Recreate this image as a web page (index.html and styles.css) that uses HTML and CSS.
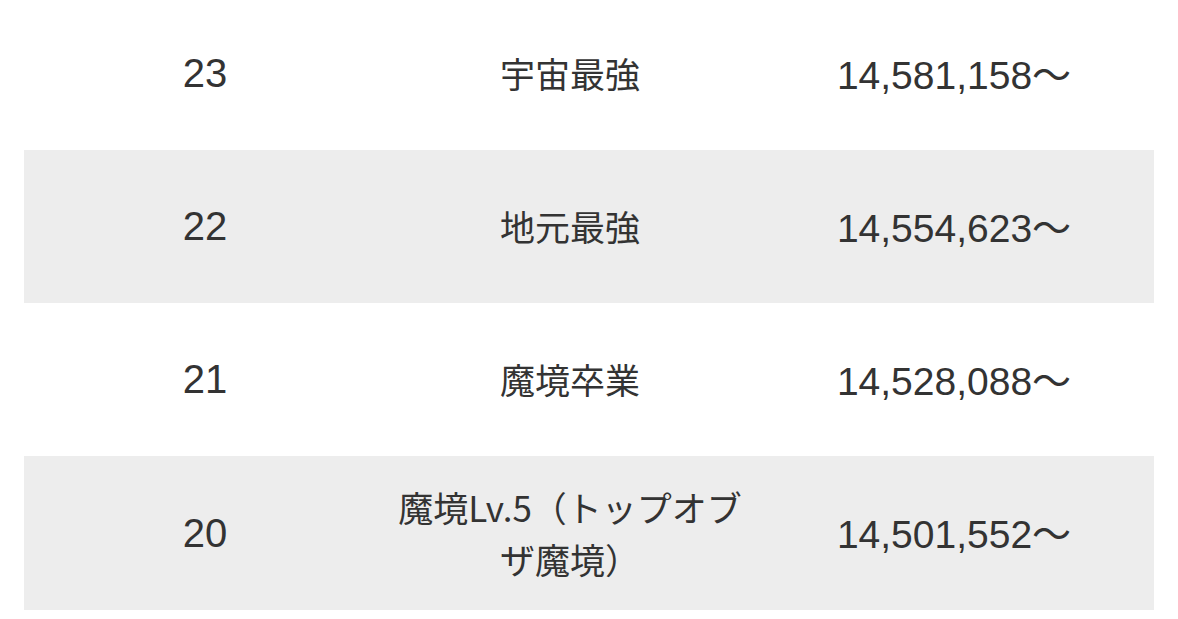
FILE: index.html
```html
<!DOCTYPE html>
<html lang="ja">
<head>
<meta charset="utf-8">
<title>Ranking</title>
<link rel="stylesheet" href="styles.css">
</head>
<body>
<div class="table">
  <div class="row">
    <div class="cell num">23</div>
    <div class="cell name">宇宙最強</div>
    <div class="cell score">14,581,158～</div>
  </div>
  <div class="row alt">
    <div class="cell num">22</div>
    <div class="cell name">地元最強</div>
    <div class="cell score">14,554,623～</div>
  </div>
  <div class="row">
    <div class="cell num">21</div>
    <div class="cell name">魔境卒業</div>
    <div class="cell score">14,528,088～</div>
  </div>
  <div class="row alt">
    <div class="cell num">20</div>
    <div class="cell name">魔境Lv.5（トップオブザ魔境）</div>
    <div class="cell score">14,501,552～</div>
  </div>
</div>
</body>
</html>
```

FILE: styles.css
```css
html, body {
  margin: 0;
  padding: 0;
  background: #ffffff;
}
body {
  color: #333333;
  font-family: "Liberation Sans", "Noto Sans CJK JP", sans-serif;
}
.table {
  margin: -3px 24px 0 24px;
  width: 1130px;
}
.row {
  display: grid;
  grid-template-columns: 362px 368px 400px;
  height: 153px;
  align-items: center;
}
.row:last-child {
  height: 154px;
}
.row.alt {
  background: #ededed;
}
.cell {
  text-align: center;
}
.num {
  font-size: 40px;
}
.score {
  font-size: 39px;
  padding-bottom: 4px;
}
.num, .score {
  font-family: "Liberation Sans", "Noto Sans CJK JP", sans-serif;
}
.name {
  font-size: 35px;
  line-height: 1.5;
  font-family: "Noto Sans CJK JP", sans-serif;
}
```
